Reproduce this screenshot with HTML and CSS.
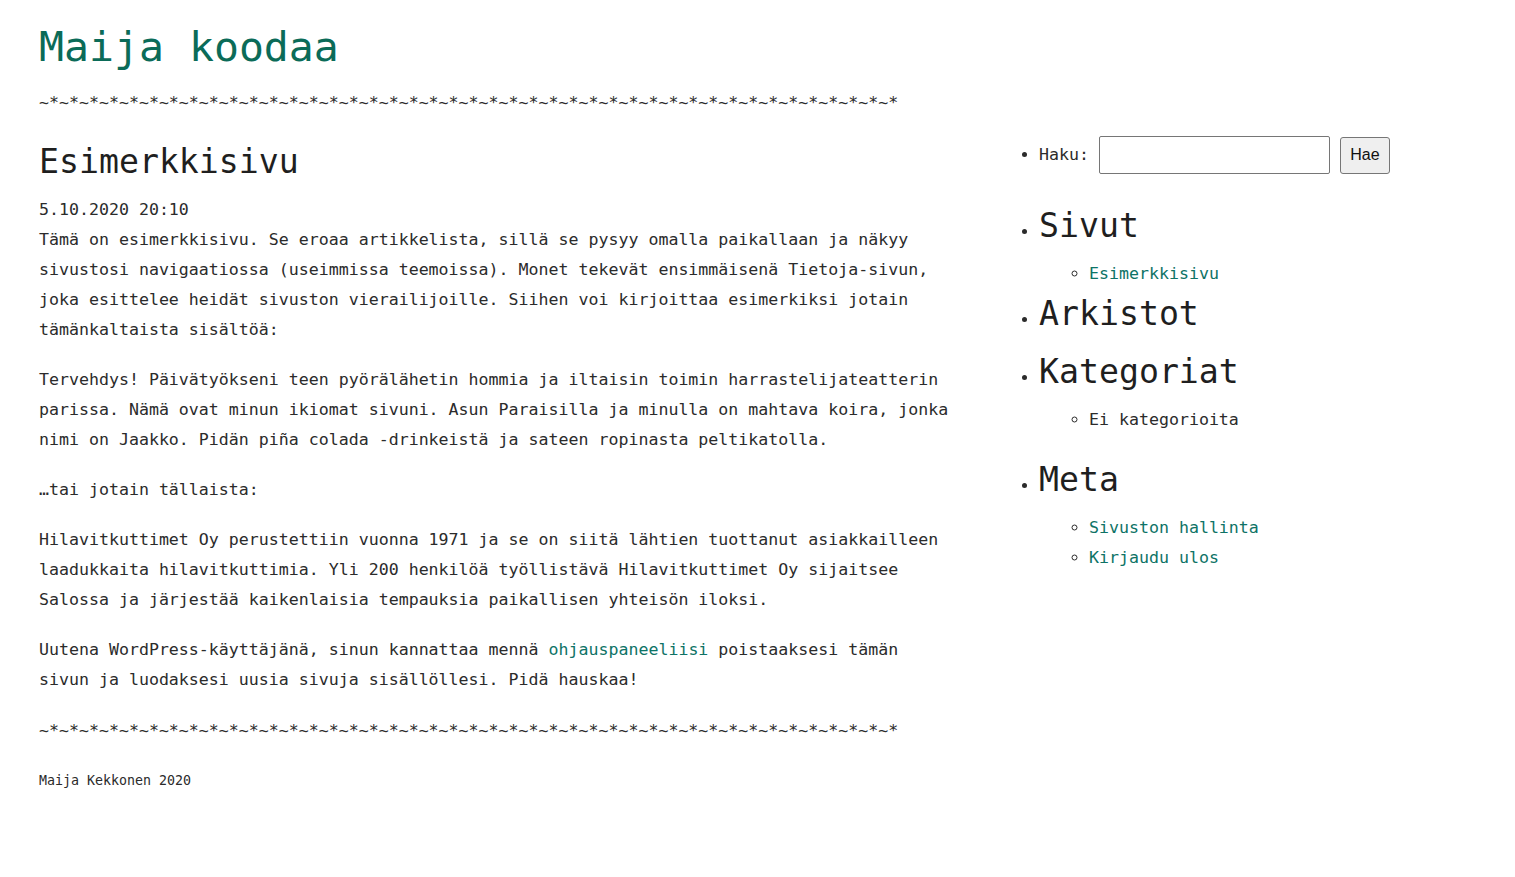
FILE: index.html
```html
<!DOCTYPE html>
<html lang="fi">
<head>
<meta charset="utf-8">
<title>Maija koodaa</title>
<link rel="stylesheet" href="styles.css">
</head>
<body>
<div class="page">
  <header class="site-header">
    <h1 class="site-title">Maija koodaa</h1>
    <div class="divider">~*~*~*~*~*~*~*~*~*~*~*~*~*~*~*~*~*~*~*~*~*~*~*~*~*~*~*~*~*~*~*~*~*~*~*~*~*~*~*~*~*~*~*</div>
  </header>
  <div class="layout">
    <main class="content">
      <h2 class="entry-title">Esimerkkisivu</h2>
      <div class="entry-date">5.10.2020 20:10</div>
      <p class="para first">Tämä on esimerkkisivu. Se eroaa artikkelista, sillä se pysyy omalla paikallaan ja näkyy sivustosi navigaatiossa (useimmissa teemoissa). Monet tekevät ensimmäisenä Tietoja-sivun, joka esittelee heidät sivuston vierailijoille. Siihen voi kirjoittaa esimerkiksi jotain tämänkaltaista sisältöä:</p>
      <p class="para">Tervehdys! Päivätyökseni teen pyörälähetin hommia ja iltaisin toimin harrastelijateatterin parissa. Nämä ovat minun ikiomat sivuni. Asun Paraisilla ja minulla on mahtava koira, jonka nimi on Jaakko. Pidän piña colada -drinkeistä ja sateen ropinasta peltikatolla.</p>
      <p class="para">…tai jotain tällaista:</p>
      <p class="para">Hilavitkuttimet Oy perustettiin vuonna 1971 ja se on siitä lähtien tuottanut asiakkailleen laadukkaita hilavitkuttimia. Yli 200 henkilöä työllistävä Hilavitkuttimet Oy sijaitsee Salossa ja järjestää kaikenlaisia tempauksia paikallisen yhteisön iloksi.</p>
      <p class="para">Uutena WordPress-käyttäjänä, sinun kannattaa mennä <a class="link" href="#">ohjauspaneeliisi</a> poistaaksesi tämän sivun ja luodaksesi uusia sivuja sisällöllesi. Pidä hauskaa!</p>
      <div class="divider bottom">~*~*~*~*~*~*~*~*~*~*~*~*~*~*~*~*~*~*~*~*~*~*~*~*~*~*~*~*~*~*~*~*~*~*~*~*~*~*~*~*~*~*~*</div>
      <footer class="site-footer">Maija Kekkonen 2020</footer>
    </main>
    <aside class="sidebar">
      <ul class="widgets">
        <li class="widget search"><form class="search-form"><label class="search-label">Haku:</label><input class="search-input" type="text"><button class="search-button" type="button">Hae</button></form></li>
        <li class="widget w-pages">
          <h2 class="widget-title">Sivut</h2>
          <ul class="sub">
            <li><a class="link" href="#">Esimerkkisivu</a></li>
          </ul>
        </li>
        <li class="widget w-archives">
          <h2 class="widget-title">Arkistot</h2>
        </li>
        <li class="widget w-cats">
          <h2 class="widget-title">Kategoriat</h2>
          <ul class="sub">
            <li>Ei kategorioita</li>
          </ul>
        </li>
        <li class="widget w-meta">
          <h2 class="widget-title">Meta</h2>
          <ul class="sub">
            <li><a class="link" href="#">Sivuston hallinta</a></li>
            <li><a class="link" href="#">Kirjaudu ulos</a></li>
          </ul>
        </li>
      </ul>
    </aside>
  </div>
</div>
</body>
</html>
```
FILE: styles.css
```css
html, body {
  margin: 0;
  padding: 0;
  background: #ffffff;
}

body {
  font-family: "DejaVu Sans Mono", "Liberation Mono", monospace;
  font-size: 16.6px;
  line-height: 30px;
  color: #2b2b2b;
}

.page {
  padding: 0 0 0 39px;
}

.site-title {
  margin: 22px 0 0;
  font-size: 41.5px;
  line-height: 50px;
  font-weight: normal;
  color: #0b6b58;
}

.divider {
  margin-top: 16px;
  line-height: 30px;
  white-space: nowrap;
  color: #2b2b2b;
}

.divider.bottom {
  margin-top: 21px;
}

.layout {
  display: grid;
  grid-template-columns: 915px 1fr;
  column-gap: 45px;
  align-items: start;
}

.content {
  padding-top: 24px;
}

.entry-title {
  margin: 0;
  font-size: 33.2px;
  line-height: 40px;
  font-weight: normal;
  color: #1f1f1f;
}

.entry-date {
  margin-top: 13px;
}

.para {
  margin: 20px 0 0;
}

.para.first {
  margin-top: 0;
}

.link {
  color: #0e7366;
  text-decoration: none;
}

.site-footer {
  margin-top: 25px;
  font-size: 13.3px;
  line-height: 20px;
  color: #2b2b2b;
}

.sidebar {
  padding-top: 18px;
}

.widgets {
  margin: 0;
  padding-left: 40px;
  list-style: disc;
}

.widget {
  margin: 0;
}

.search {
  margin-bottom: 32px;
}

.search-form {
  display: inline;
  margin: 0;
}

.search-label {
  margin-right: 10px;
}

.search-input {
  box-sizing: border-box;
  width: 231px;
  height: 38px;
  margin: 0;
  padding: 2px 6px;
  border: 1px solid #767676;
  border-radius: 2px;
  background: #fff;
  vertical-align: middle;
  font: 16px "Liberation Sans", Arial, sans-serif;
}

.search-button {
  box-sizing: border-box;
  width: 50px;
  height: 37px;
  margin: 0 0 0 10px;
  padding: 0;
  border: 1px solid #767676;
  border-radius: 3px;
  background: #efefef;
  color: #111;
  vertical-align: middle;
  font: 16px "Liberation Sans", Arial, sans-serif;
}

.widget-title {
  margin: 0;
  font-size: 33.2px;
  line-height: 40px;
  font-weight: normal;
  color: #1f1f1f;
}

.sub {
  margin: 13px 0 0;
  padding-left: 50px;
  list-style: circle;
}

.w-pages {
  margin-bottom: 5px;
}

.w-archives {
  margin-bottom: 18px;
}

.w-cats {
  margin-bottom: 25px;
}
```
